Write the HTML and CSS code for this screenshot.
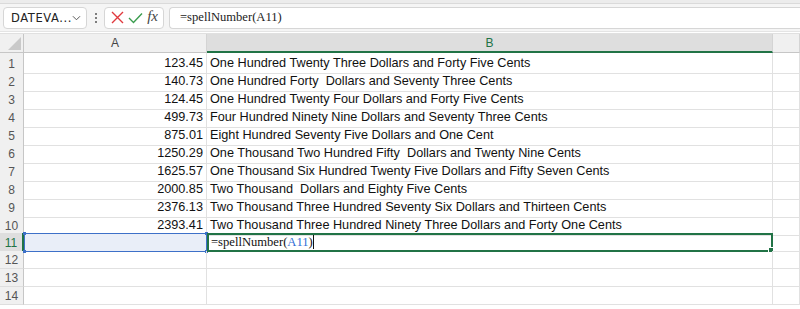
FILE: index.html
```html
<!DOCTYPE html>
<html lang="en">
<head>
    <meta charset="UTF-8">
    <title>spellNumber</title>
    <link rel="stylesheet" href="styles.css">
</head>
<body>
    <div class="topstrip"></div>

    <div class="formula-bar">
        <div class="name-box">
            <span>DATEVA...</span>
            <svg width="10" height="6" viewBox="0 0 10 6"><path d="M1 1 L5 5 L9 1" fill="none" stroke="#555" stroke-width="1.1"/></svg>
        </div>
        <div class="dots"><i></i><i></i><i></i></div>
        <div class="fx-box">
            <svg width="13" height="13" viewBox="0 0 13 13"><path d="M1 1 L12 12 M12 1 L1 12" stroke="#e0393e" stroke-width="1.4"/></svg>
            <svg width="15" height="12" viewBox="0 0 15 12"><path d="M1 6 L5.5 10.5 L14 1.5" fill="none" stroke="#3a9c4e" stroke-width="1.4"/></svg>
            <span class="fx">fx</span>
        </div>
        <div class="formula-input">=spellNumber(A11)</div>
    </div>

    <div class="sheet">
        <div class="row head">
            <div class="rownum corner"><svg width="13" height="13" viewBox="0 0 13 13"><path d="M13 0 L13 13 L0 13 Z" fill="#c9c9c9"/></svg></div>
            <div class="col">A</div>
            <div class="col active">B</div>
            <div class="col"></div>
        </div>
        <div id="rows"></div>
    </div>

    <script>
        const data = [
            ['123.45', 'One Hundred Twenty Three Dollars and Forty Five Cents'],
            ['140.73', 'One Hundred Forty  Dollars and Seventy Three Cents'],
            ['124.45', 'One Hundred Twenty Four Dollars and Forty Five Cents'],
            ['499.73', 'Four Hundred Ninety Nine Dollars and Seventy Three Cents'],
            ['875.01', 'Eight Hundred Seventy Five Dollars and One Cent'],
            ['1250.29', 'One Thousand Two Hundred Fifty  Dollars and Twenty Nine Cents'],
            ['1625.57', 'One Thousand Six Hundred Twenty Five Dollars and Fifty Seven Cents'],
            ['2000.85', 'Two Thousand  Dollars and Eighty Five Cents'],
            ['2376.13', 'Two Thousand Three Hundred Seventy Six Dollars and Thirteen Cents'],
            ['2393.41', 'Two Thousand Three Hundred Ninety Three Dollars and Forty One Cents']
        ];
        const rows = document.getElementById('rows');

        for (let i = 1; i <= 14; i++) {
            const row = document.createElement('div');
            row.className = 'row';
            const d = data[i - 1] || ['', ''];

            const num = document.createElement('div');
            num.className = 'rownum';
            num.textContent = i;

            const a = document.createElement('div');
            a.className = 'cell num';
            a.textContent = d[0];

            const b = document.createElement('div');
            b.className = 'cell';
            b.textContent = d[1];

            const c = document.createElement('div');
            c.className = 'cell';

            if (i === 11) {
                num.classList.add('active');
                a.classList.add('ref');
                a.innerHTML = '<span class="h tl"></span><span class="h tr"></span><span class="h bl"></span><span class="h br"></span>';
                b.classList.add('editing');
                b.innerHTML = '<span class="formula">=spellNumber(<span class="refname">A11</span>)</span><span class="caret"></span><span class="fill"></span>';
            }

            row.append(num, a, b, c);
            rows.appendChild(row);
        }
    </script>
</body>
</html>
```

FILE: styles.css
```css
body {
    margin: 0;
    background: #fff;
    font-family: 'Liberation Sans', Arial, sans-serif;
    overflow: hidden;
}

.topstrip {
    height: 3px;
    background: #ececec;
    border-bottom: 1px solid #dadada;
}

/* Barra de fórmulas */
.formula-bar {
    display: flex;
    align-items: center;
    height: 27px;
    padding: 0 0 0 3px;
    background: #f5f5f5;
    border-bottom: 1px solid #e4e4e4;
}

.name-box, .fx-box, .formula-input {
    height: 22px;
    background: #fff;
    border: 1px solid #d6d6d6;
    border-radius: 4px;
    box-sizing: border-box;
}

.name-box {
    width: 84px;
    display: flex;
    align-items: center;
    justify-content: space-between;
    padding: 0 5px 0 7px;
    font-family: 'DejaVu Sans', sans-serif;
    font-size: 11.5px;
    letter-spacing: 0.6px;
    color: #222;
}

.dots {
    width: 17px;
    display: flex;
    flex-direction: column;
    align-items: center;
    gap: 2px;
}
.dots i {
    width: 2px;
    height: 2px;
    background: #555;
    border-radius: 1px;
}

.fx-box {
    width: 60px;
    display: flex;
    align-items: center;
    justify-content: space-between;
    padding: 0 5px 0 6px;
}
.fx {
    font-family: 'Liberation Serif', serif;
    font-style: italic;
    font-size: 15px;
    color: #444;
    margin-top: -3px;
}

.formula-input {
    flex: 1;
    margin-left: 5px;
    border-right: none;
    border-radius: 4px 0 0 4px;
    padding: 2px 0 0 10px;
    font-family: 'Liberation Serif', serif;
    font-size: 12.6px;
    color: #222;
}

/* Planilha */
.sheet {
    margin-top: 1px;
    border-top: 1px solid #e0e0e0;
}

.row {
    display: grid;
    grid-template-columns: 24px 183px 566px 1fr;
    height: 18px;
}

.row.head {
    height: 19px;
    background: #f0f0f0;
}

.col {
    display: flex;
    align-items: center;
    justify-content: center;
    font-size: 12px;
    color: #444;
    border-right: 1px solid #d4d4d4;
    border-bottom: 1px solid #c6c6c6;
}
.col.active {
    background: #dedede;
    color: #217346;
    border-bottom: 2px solid #217346;
}

.rownum {
    display: flex;
    align-items: center;
    justify-content: center;
    padding-top: 1px;
    background: #f0f0f0;
    color: #555;
    font-size: 12px;
    border-right: 1px solid #c6c6c6;
    border-bottom: 1px solid #dedede;
}
.rownum.corner {
    align-items: flex-end;
    justify-content: flex-end;
    padding: 0 2px 2px 0;
    border-bottom-color: #c6c6c6;
}
.rownum.active {
    background: #dedede;
    color: #217346;
    border-right: 2px solid #217346;
}

.cell {
    position: relative;
    font-size: 12.7px;
    line-height: 20px;
    color: #111;
    padding: 0 3px;
    white-space: pre;
    border-right: 1px solid #e1e1e1;
    border-bottom: 1px solid #e1e1e1;
    box-sizing: border-box;
}
.cell.num {
    text-align: right;
}

/* Referência A11 */
.cell.ref {
    background: #e9eef8;
    border: 1px solid #3d70c8;
}
.h {
    position: absolute;
    width: 3px;
    height: 3px;
    background: #3d70c8;
}
.tl { left: -2px; top: -2px; }
.tr { right: -2px; top: -2px; }
.bl { left: -2px; bottom: -2px; }
.br { right: -2px; bottom: -2px; }

/* Célula ativa B11 */
.cell.editing {
    border: 2px solid #217346;
    padding-left: 2px;
    line-height: 15px;
    overflow: visible;
}
.formula {
    font-family: 'Liberation Serif', serif;
    font-size: 12.6px;
    color: #111;
}
.refname {
    color: #2f6fd6;
}
.caret {
    display: inline-block;
    width: 1px;
    height: 14px;
    background: #111;
    vertical-align: -3px;
}
.fill {
    position: absolute;
    right: -3px;
    bottom: -3px;
    width: 4px;
    height: 4px;
    background: #217346;
    border: 1px solid #fff;
}
```
